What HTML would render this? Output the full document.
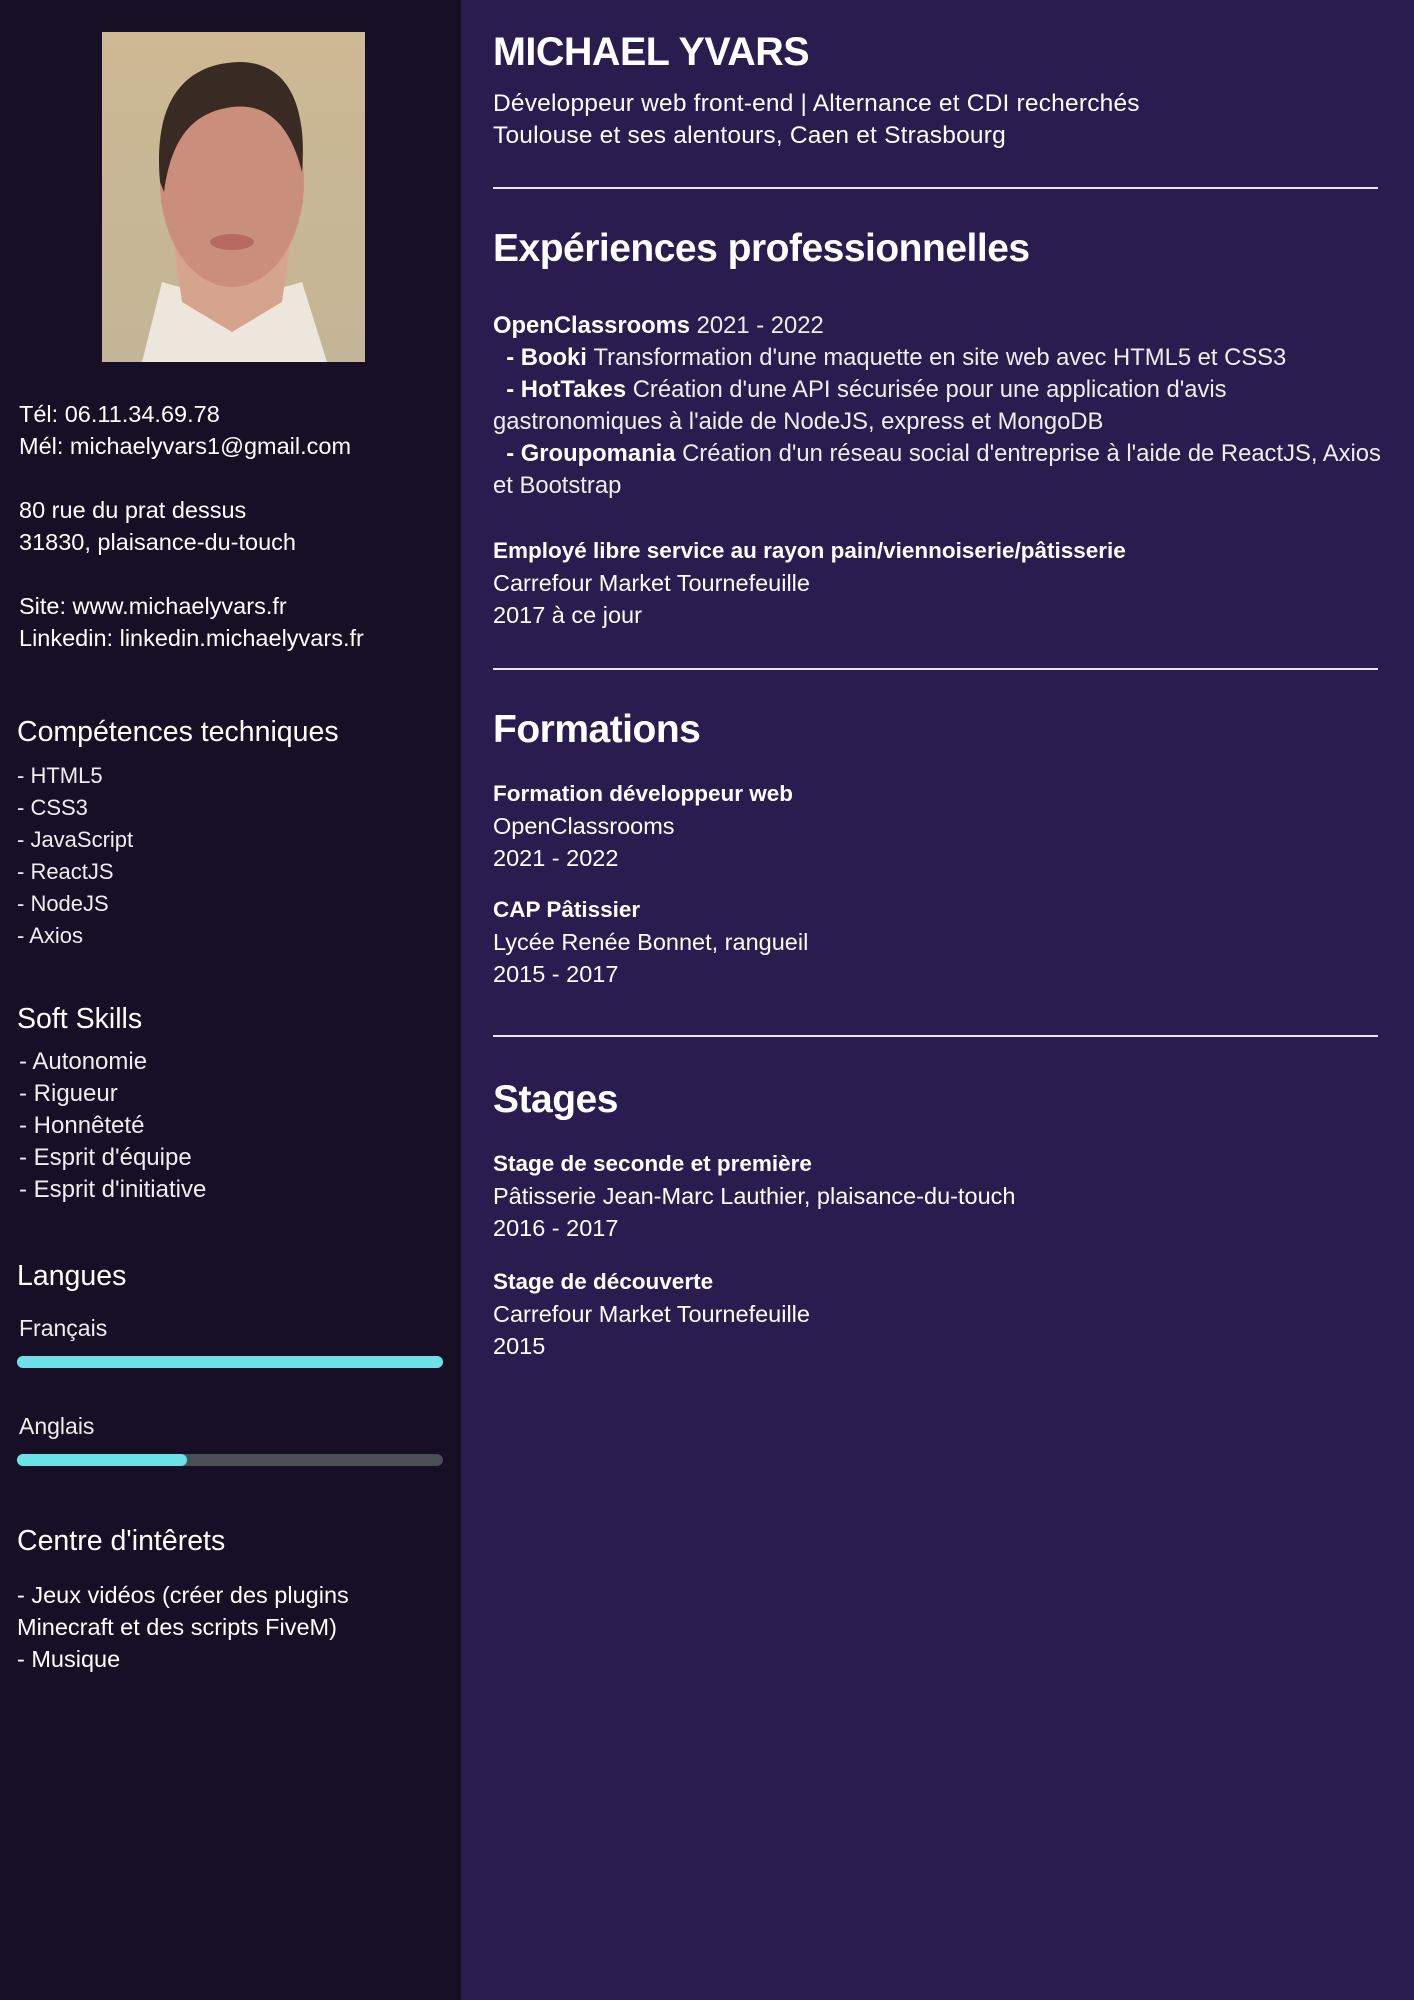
<!DOCTYPE html>
<html><head><meta charset="utf-8"><style>
*{margin:0;padding:0;box-sizing:border-box}
body{width:1414px;height:2000px;position:relative;background:#2a1c4f;font-family:"Liberation Sans",sans-serif;color:#fff;overflow:hidden}
#side{position:absolute;left:0;top:0;width:461px;height:2000px;background:#170f26}
.l{position:absolute;white-space:nowrap;line-height:32px;height:32px;font-size:23.5px}
.t{font-weight:300;color:#eee}
.o{font-size:23.8px}
.b{font-weight:bold;font-size:22.5px}
.h{font-weight:bold;font-size:39px;line-height:44px;height:44px;letter-spacing:-0.5px}
.sh{font-size:28.5px;line-height:36px;height:36px}
.hr{position:absolute;left:493px;width:885px;height:2px;background:#e8e6ee}
.bar{position:absolute;left:17px;width:426px;height:12px;border-radius:6px;background:#4a4f57}
.fill{height:12px;border-radius:6px;background:#6ae2e8}
</style></head><body>
<div id="side"></div>
<svg style="position:absolute;left:102px;top:32px" width="263" height="330" viewBox="0 0 263 330">
<defs><linearGradient id="bg" x1="0" y1="0" x2="0" y2="1"><stop offset="0" stop-color="#cdb994"/><stop offset="1" stop-color="#c3b597"/></linearGradient></defs>
<rect width="263" height="330" fill="url(#bg)"/>
<path d="M40 330 L60 250 L130 270 L200 250 L225 330Z" fill="#ece6dc"/>
<path d="M70 200 L80 270 L130 300 L180 270 L190 200Z" fill="#d6a48c"/>
<ellipse cx="130" cy="150" rx="72" ry="105" fill="#c98e7c"/>
<path d="M58 150 C50 60 90 30 140 30 C190 32 205 80 200 140 C190 100 170 70 130 75 C95 80 70 100 62 160Z" fill="#3a2a24"/>
<ellipse cx="130" cy="210" rx="22" ry="8" fill="#b56a62"/>
</svg>

<div class="l" style="left:19px;top:398px">Tél: 06.11.34.69.78</div>
<div class="l" style="left:19px;top:430px">Mél: michaelyvars1@gmail.com</div>
<div class="l" style="left:19px;top:494px">80 rue du prat dessus</div>
<div class="l" style="left:19px;top:526px">31830, plaisance-du-touch</div>
<div class="l" style="left:19px;top:590px">Site: www.michaelyvars.fr</div>
<div class="l" style="left:19px;top:622px">Linkedin: linkedin.michaelyvars.fr</div>

<div class="l sh" style="left:17px;top:714px">Compétences techniques</div>
<div class="l t" style="left:17px;top:760px;font-size:22px">- HTML5</div>
<div class="l t" style="left:17px;top:792px;font-size:22px">- CSS3</div>
<div class="l t" style="left:17px;top:824px;font-size:22px">- JavaScript</div>
<div class="l t" style="left:17px;top:856px;font-size:22px">- ReactJS</div>
<div class="l t" style="left:17px;top:888px;font-size:22px">- NodeJS</div>
<div class="l t" style="left:17px;top:920px;font-size:22px">- Axios</div>

<div class="l sh" style="left:17px;top:1001px">Soft Skills</div>
<div class="l t" style="left:19px;top:1046px;font-size:24px">- Autonomie</div>
<div class="l t" style="left:19px;top:1078px;font-size:24px">- Rigueur</div>
<div class="l t" style="left:19px;top:1110px;font-size:24px">- Honnêteté</div>
<div class="l t" style="left:19px;top:1142px;font-size:24px">- Esprit d'équipe</div>
<div class="l t" style="left:19px;top:1174px;font-size:24px">- Esprit d'initiative</div>

<div class="l sh" style="left:17px;top:1258px">Langues</div>
<div class="l t" style="left:19px;top:1312px;font-size:23px">Français</div>
<div class="bar" style="top:1356px"><div class="fill" style="width:426px"></div></div>
<div class="l t" style="left:19px;top:1410px;font-size:23px">Anglais</div>
<div class="bar" style="top:1454px"><div class="fill" style="width:170px"></div></div>

<div class="l sh" style="left:17px;top:1523px">Centre d'intêrets</div>
<div class="l" style="left:17px;top:1579px">- Jeux vidéos (créer des plugins</div>
<div class="l" style="left:17px;top:1611px">Minecraft et des scripts FiveM)</div>
<div class="l" style="left:17px;top:1643px">- Musique</div>

<div class="l h" style="left:493px;top:30px;font-size:39.5px">MICHAEL YVARS</div>
<div class="l" style="left:493px;top:88px;font-size:24.5px;letter-spacing:0.2px">Développeur web front-end | Alternance et CDI recherchés</div>
<div class="l" style="left:493px;top:120px;font-size:24.5px;letter-spacing:0.2px">Toulouse et ses alentours, Caen et Strasbourg</div>
<div class="hr" style="top:187px"></div>

<div class="l h" style="left:493px;top:227px">Expériences professionnelles</div>
<div class="l o" style="left:493px;top:310px"><b>OpenClassrooms</b> <span class="t">2021 - 2022</span></div>
<div class="l o" style="left:493px;top:342px">&nbsp; <b>- Booki</b> <span class="t">Transformation d'une maquette en site web avec HTML5 et CSS3</span></div>
<div class="l o" style="left:493px;top:374px">&nbsp; <b>- HotTakes</b> <span class="t">Création d'une API sécurisée pour une application d'avis</span></div>
<div class="l t o" style="left:493px;top:406px">gastronomiques à l'aide de NodeJS, express et MongoDB</div>
<div class="l o" style="left:493px;top:438px">&nbsp; <b>- Groupomania</b> <span class="t">Création d'un réseau social d'entreprise à l'aide de ReactJS, Axios</span></div>
<div class="l t o" style="left:493px;top:470px">et Bootstrap</div>
<div class="l b" style="left:493px;top:535px">Employé libre service au rayon pain/viennoiserie/pâtisserie</div>
<div class="l" style="left:493px;top:567px">Carrefour Market Tournefeuille</div>
<div class="l" style="left:493px;top:599px">2017 à ce jour</div>
<div class="hr" style="top:668px"></div>

<div class="l h" style="left:493px;top:708px">Formations</div>
<div class="l b" style="left:493px;top:778px">Formation développeur web</div>
<div class="l" style="left:493px;top:810px">OpenClassrooms</div>
<div class="l" style="left:493px;top:842px">2021 - 2022</div>
<div class="l b" style="left:493px;top:894px">CAP Pâtissier</div>
<div class="l" style="left:493px;top:926px">Lycée Renée Bonnet, rangueil</div>
<div class="l" style="left:493px;top:958px">2015 - 2017</div>
<div class="hr" style="top:1035px"></div>

<div class="l h" style="left:493px;top:1078px">Stages</div>
<div class="l b" style="left:493px;top:1148px">Stage de seconde et première</div>
<div class="l" style="left:493px;top:1180px">Pâtisserie Jean-Marc Lauthier, plaisance-du-touch</div>
<div class="l" style="left:493px;top:1212px">2016 - 2017</div>
<div class="l b" style="left:493px;top:1266px">Stage de découverte</div>
<div class="l" style="left:493px;top:1298px">Carrefour Market Tournefeuille</div>
<div class="l" style="left:493px;top:1330px">2015</div>
</body></html>
